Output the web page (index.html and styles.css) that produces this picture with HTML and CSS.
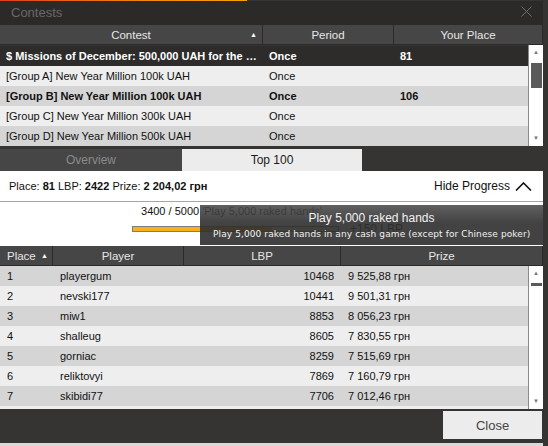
FILE: index.html
```html
<!DOCTYPE html>
<html lang="en">
<head>
    <meta charset="UTF-8">
    <meta name="viewport" content="width=device-width, initial-scale=1.0">
    <title>Contests</title>
    <link rel="stylesheet" href="styles.css">
</head>
<body>
<div class="window">
    <div class="loadbar"></div>
    <div class="titlebar">
        <span class="title">Contests</span>
        <svg class="close-x" width="11" height="11" viewBox="0 0 11 11">
            <path d="M0.5 0.5 L10.5 10.5 M10.5 0.5 L0.5 10.5" stroke="#6e6e6e" stroke-width="1" fill="none"/>
        </svg>
    </div>

    <div class="contests">
        <div class="head contests-cols">
            <div class="hcell">Contest <span class="sort">&#9650;</span></div>
            <div class="hcell">Period</div>
            <div class="hcell">Your Place</div>
        </div>
        <div class="body">
            <div class="rows">
                <div class="row contests-cols selected">
                    <div class="cell first">$ Missions of December: 500,000 UAH for the winners of missions</div>
                    <div class="cell">Once</div>
                    <div class="cell place">81</div>
                </div>
                <div class="row contests-cols light">
                    <div class="cell first">[Group A] New Year Million 100k UAH</div>
                    <div class="cell">Once</div>
                    <div class="cell place"></div>
                </div>
                <div class="row contests-cols dark bold">
                    <div class="cell first">[Group B] New Year Million 100k UAH</div>
                    <div class="cell">Once</div>
                    <div class="cell place">106</div>
                </div>
                <div class="row contests-cols light">
                    <div class="cell first">[Group C] New Year Million 300k UAH</div>
                    <div class="cell">Once</div>
                    <div class="cell place"></div>
                </div>
                <div class="row contests-cols dark">
                    <div class="cell first">[Group D] New Year Million 500k UAH</div>
                    <div class="cell">Once</div>
                    <div class="cell place"></div>
                </div>
            </div>
            <div class="scrollbar">
                <span class="arrow">&#9650;</span>
                <div class="track"><div class="thumb big"></div></div>
                <span class="arrow">&#9660;</span>
            </div>
        </div>
    </div>

    <div class="tabs">
        <div class="tab">Overview</div>
        <div class="tab active">Top 100</div>
    </div>

    <div class="info">
        <div>Place: <b>81</b> LBP: <b>2422</b> Prize: <b>2 204,02 грн</b></div>
        <div class="toggle">Hide Progress
            <svg width="17" height="9" viewBox="0 0 17 9">
                <path d="M1 8.5 L8.5 1 L16 8.5" stroke="#111" stroke-width="1.6" fill="none"/>
            </svg>
        </div>
    </div>

    <div class="progress">
        <div class="mission">
            <div class="mission-main">
                <div class="mission-text">3400 / 5000 'Play 5,000 raked hands'</div>
                <div class="bar"><div class="fill" style="width: 68%"></div></div>
            </div>
            <div class="reward">+150 LBP</div>
        </div>
        <div class="tooltip">
            <div class="tip-title">Play 5,000 raked hands</div>
            <div class="tip-text">Play 5,000 raked hands in any cash game (except for Chinese poker)</div>
        </div>
    </div>

    <div class="board">
        <div class="head board-cols">
            <div class="hcell left">Place <span class="sort">&#9650;</span></div>
            <div class="hcell">Player</div>
            <div class="hcell">LBP</div>
            <div class="hcell">Prize</div>
        </div>
        <div class="body">
            <div class="rows">
                <div class="row board-cols dark"><div class="cell">1</div><div class="cell">playergum</div><div class="cell num">10468</div><div class="cell">9 525,88 грн</div></div>
                <div class="row board-cols light"><div class="cell">2</div><div class="cell">nevski177</div><div class="cell num">10441</div><div class="cell">9 501,31 грн</div></div>
                <div class="row board-cols dark"><div class="cell">3</div><div class="cell">miw1</div><div class="cell num">8853</div><div class="cell">8 056,23 грн</div></div>
                <div class="row board-cols light"><div class="cell">4</div><div class="cell">shalleug</div><div class="cell num">8605</div><div class="cell">7 830,55 грн</div></div>
                <div class="row board-cols dark"><div class="cell">5</div><div class="cell">gorniac</div><div class="cell num">8259</div><div class="cell">7 515,69 грн</div></div>
                <div class="row board-cols light"><div class="cell">6</div><div class="cell">reliktovyi</div><div class="cell num">7869</div><div class="cell">7 160,79 грн</div></div>
                <div class="row board-cols dark"><div class="cell">7</div><div class="cell">skibidi77</div><div class="cell num">7706</div><div class="cell">7 012,46 грн</div></div>
                <div class="row board-cols light"></div>
            </div>
            <div class="scrollbar">
                <span class="arrow">&#9650;</span>
                <div class="track"><div class="thumb small"></div></div>
                <span class="arrow">&#9660;</span>
            </div>
        </div>
    </div>

    <div class="footer">
        <button class="close-btn">Close</button>
    </div>
</div>
</body>
</html>
```

FILE: styles.css
```css
body {
    margin: 0;
    padding: 0;
    background-color: #353432;
    font-family: "Liberation Sans", Arial, sans-serif;
    font-size: 11px;
    color: #111;
}

.window {
    width: 543px;
    height: 446px;
    display: flex;
    flex-direction: column;
    background-color: #353432;
    border-bottom: 3px solid #d9d9d9;
    box-sizing: border-box;
}

.loadbar {
    height: 1px;
    width: 247px;
    background: linear-gradient(to right, #e0401a, #f08a10 60%, #f5a200);
}

.titlebar {
    height: 24px;
    display: flex;
    align-items: center;
    justify-content: space-between;
    padding: 0 11px;
    background-color: #2b2a29;
}

.title {
    color: #686868;
    font-size: 13px;
    margin-top: -2px;
}

.close-x {
    margin-top: -3px;
}

/* tables */

.contests-cols {
    display: grid;
    grid-template-columns: 263px 131px 149px;
}

.board-cols {
    display: grid;
    grid-template-columns: 53px 131px 157px 202px;
}

.head {
    height: 20px;
    background-color: #464646;
    border-bottom: 1px solid #2a2a2a;
    box-sizing: border-box;
}

.hcell {
    display: flex;
    align-items: center;
    justify-content: center;
    color: #e6e6e6;
    font-size: 11.5px;
    border-right: 1px solid #2a2a2a;
    position: relative;
}

.hcell.left {
    justify-content: flex-start;
    padding-left: 7px;
}

.sort {
    font-size: 7px;
    color: #fff;
    position: absolute;
    right: 5px;
    top: 6px;
}

.board .sort {
    right: 4px;
}

.body {
    display: flex;
}

.rows {
    flex: 1;
    overflow: hidden;
}

.row {
    height: 20px;
    align-items: center;
}

.row.light {
    background-color: #eeeeee;
}

.row.dark {
    background-color: #d5d5d5;
}

.row.selected {
    background-color: #2d2c2b;
    color: #fff;
    font-weight: bold;
}

.row.bold {
    font-weight: bold;
}

.cell {
    padding-left: 6px;
    white-space: nowrap;
    overflow: hidden;
    text-overflow: ellipsis;
}

.cell.first {
    padding-right: 6px;
}

.board .cell {
    padding-left: 7px;
}

.board .cell.num {
    text-align: right;
    padding-right: 7px;
}

.contests .rows {
    height: 101px;
    padding-top: 1px;
}

.board .rows {
    height: 143px;
}

.scrollbar {
    width: 15px;
    background-color: #fff;
    border-left: 1px solid #8a8a8a;
    display: flex;
    flex-direction: column;
    align-items: center;
    box-sizing: border-box;
}

.contests .scrollbar {
    height: 101px;
}

.board .scrollbar {
    height: 143px;
}

.arrow {
    font-size: 6px;
    color: #777;
    height: 15px;
    line-height: 15px;
}

.track {
    flex: 1;
    width: 100%;
    display: flex;
    justify-content: center;
}

.thumb {
    width: 11px;
    background-color: #5a5a5a;
}

.thumb.big {
    height: 25px;
    margin-top: 3px;
}

.thumb.small {
    height: 3px;
    margin-top: 2px;
}

/* tabs */

.tabs {
    display: flex;
    height: 22px;
    margin-top: 2px;
}

.tab {
    width: 182px;
    display: flex;
    align-items: center;
    justify-content: center;
    background-color: #464646;
    color: #8a8a8a;
    font-size: 12px;
}

.tab.active {
    width: 180px;
    background-color: #ececec;
    color: #1a1a1a;
}

.info {
    height: 30px;
    display: flex;
    align-items: center;
    justify-content: space-between;
    padding: 0 11px 0 9px;
    background-color: #fff;
    border-bottom: 1px solid #a6a6a6;
}

.toggle {
    display: flex;
    align-items: center;
    gap: 5px;
    font-size: 12px;
}

/* progress */

.progress {
    height: 44px;
    background-color: #fff;
    position: relative;
}

.mission {
    display: flex;
    align-items: flex-end;
    padding-left: 132px;
    padding-top: 3px;
}

.mission-main {
    width: 207px;
    display: flex;
    flex-direction: column;
    align-items: center;
}

.mission-text {
    font-size: 11px;
    white-space: nowrap;
    margin-left: -8px;
}

.bar {
    width: 207px;
    height: 6px;
    margin-top: 9px;
    border: 1px solid #7d7d7d;
    box-sizing: border-box;
    background-color: #fce6a8;
}

.fill {
    height: 100%;
    background-color: #f6b21c;
}

.reward {
    margin-left: 11px;
    font-size: 12px;
    color: #333;
    margin-bottom: -4px;
}

.tooltip {
    position: absolute;
    left: 200px;
    top: 3px;
    width: 343px;
    height: 40px;
    box-sizing: border-box;
    background: linear-gradient(rgba(74, 74, 74, 0.88), rgba(46, 46, 46, 0.9) 45%);
    color: #f2f2f2;
    text-align: center;
    padding-top: 6px;
}

.tip-title {
    font-size: 12px;
}

.tip-text {
    font-family: "DejaVu Sans", Verdana, sans-serif;
    font-size: 9px;
    letter-spacing: 0.1px;
    margin-top: 4px;
    text-align: left;
    padding-left: 13px;
}

/* footer */

.footer {
    flex: 1;
    display: flex;
    justify-content: flex-end;
    padding-top: 2px;
}

.close-btn {
    width: 99px;
    height: 28px;
    border: none;
    background-color: #ececec;
    color: #444;
    font-family: "Liberation Sans", Arial, sans-serif;
    font-size: 13px;
    margin-right: 1px;
    padding: 0;
}
```
